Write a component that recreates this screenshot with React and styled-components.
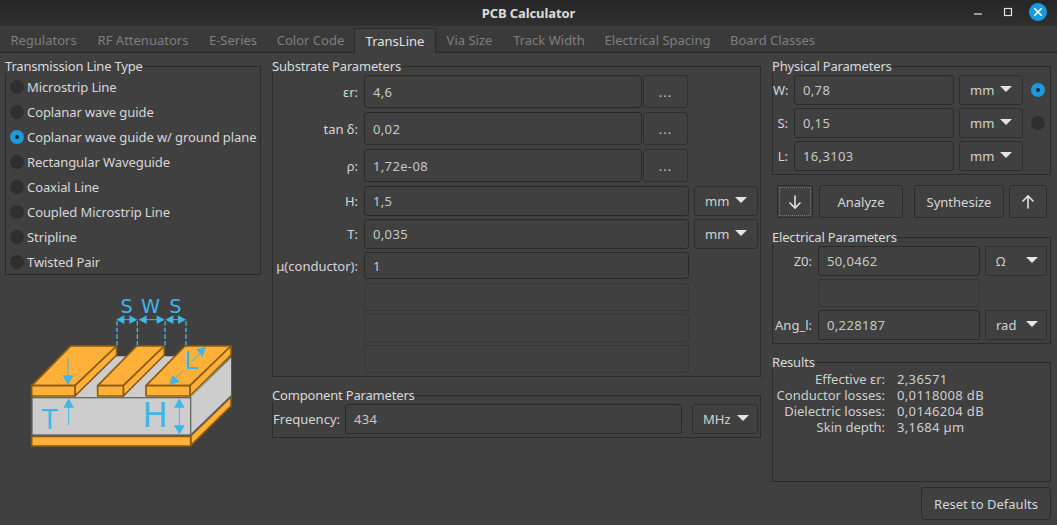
import React from "react";
import styled, { createGlobalStyle } from "styled-components";

const Global = createGlobalStyle`
  html, body { margin: 0; padding: 0; background: #404040; }
  body { width: 1057px; height: 525px; overflow: hidden; font-family: "Noto Sans", "Open Sans", sans-serif; font-size: 13px; color: #d6d6d6; }
  * { box-sizing: border-box; }
`;

const Window = styled.div`
  width: 1057px; height: 525px; display: flex; flex-direction: column; background: #404040;
`;
const TitleBar = styled.header`
  height: 26px; flex: none; display: flex; align-items: center; justify-content: center; position: relative;
  background: linear-gradient(#262626, #2f2f2f);
  font-weight: 700; font-size: 13px; color: #dcdcdc; letter-spacing: -0.1px;
`;
const WinControls = styled.div`
  position: absolute; right: 10px; top: 2px; display: flex; align-items: center; gap: 0;
`;
const WinIcon = styled.svg`
  display: block;
`;
const TabBar = styled.nav`
  height: 27px; flex: none; display: flex; align-items: flex-end; background: #3a3a3a; border-bottom: 1px solid #2a2a2a; padding-left: 0;
`;
const Tab = styled.div`
  height: ${p => (p.$active ? "25px" : "24px")};
  width: ${p => p.$w}px;
  display: flex; align-items: center; justify-content: center; white-space: nowrap;
  color: ${p => (p.$active ? "#e0e0e0" : "#7f7f7f")};
  font-size: 13px;
  ${p => p.$active ? "background:#404040;border:1px solid #2a2a2a;border-bottom:none;margin-bottom:-1px;border-radius:2px 2px 0 0;" : ""}
`;
const Body = styled.main`
  flex: 1; display: flex; gap: 11px; padding: 13px 6px 0 5px; align-items: flex-start;
`;
const Column = styled.section`
  width: ${p => p.$w}px; flex: none; display: flex; flex-direction: column;
`;
const Group = styled.div`
  position: relative; height: ${p => p.$h}px; margin-top: ${p => p.$mt || 0}px;
  border: 1px solid #2b2b2b; padding-top: 8px;
  display: flex; flex-direction: column;
`;
const GroupTitle = styled.span`
  position: absolute; left: -1px; top: -7px; line-height: 13px; background: #404040; color: #dadada; white-space: nowrap; letter-spacing: -0.18px;
`;
const RadioRow = styled.div`
  height: 25px; display: flex; align-items: center; gap: 3px; padding-left: 4px; color: #d8d8d8; white-space: nowrap; font-size: 13px; letter-spacing: -0.09px;
`;
const Radio = styled.span`
  width: 14px; height: 14px; border-radius: 50%; flex: none; display: flex; align-items: center; justify-content: center;
  background: ${p => (p.$on ? "#1b9ae0" : "#2f2f2f")};
  &::after { content: ""; display: ${p => (p.$on ? "block" : "none")}; width: 4px; height: 4px; border-radius: 50%; background: #232323; }
`;
const Diagram = styled.svg`
  display: block; margin-top: 6px;
`;
const Rows = styled.div`
  display: flex; flex-direction: column; gap: ${p => p.$gap}px;
`;
const Row = styled.div`
  display: flex; align-items: stretch; height: ${p => p.$h}px; margin-top: ${p => p.$mt || 0}px;
`;
const Label = styled.label`
  width: ${p => p.$w}px; flex: none; text-align: right; align-self: center; padding-right: ${p => p.$pr ?? 6}px; color: #d6d6d6; white-space: nowrap;
`;
const Input = styled.div`
  width: ${p => p.$w}px; flex: none; margin-left: ${p => p.$ml || 0}px; border: 1px solid ${p => (p.$empty ? "#363636" : "#2a2a2a")}; border-radius: 3px; background: #404040;
  display: flex; align-items: center; padding-left: 8px; color: #c8c8c8; letter-spacing: 0.35px;
`;
const DotsBtn = styled.div`
  width: 45px; flex: none; margin-left: 1px; border: 1px solid #2f2f2f; border-radius: 3px; display: flex; align-items: center; justify-content: center; color: #c8c8c8; background: #404040; letter-spacing: 1px;
`;
const Combo = styled.div`
  width: ${p => p.$w}px; flex: none; margin-left: ${p => p.$ml}px; border: 1px solid #2e2e2e; border-radius: 3px; display: flex; align-items: center; justify-content: space-between;
  padding: 0 ${p => p.$pr ?? 10}px 0 10px; color: #d2d2d2; background: #404040;
  &::after { content: ""; border-left: 6.5px solid transparent; border-right: 6.5px solid transparent; border-top: 6.5px solid #e4e4e4; margin-top: -2px; }
`;
const SideRadio = styled(Radio)`
  align-self: center; margin-left: 8px;
`;
const ActionRow = styled.div`
  display: flex; height: 33px; margin: 10px 0 19px 5px;
`;
const Button = styled.button`
  width: ${p => p.$w}px; margin-left: ${p => p.$ml || 0}px; flex: none; height: 100%; padding: 0; font: inherit; color: #d6d6d6; background: #404040; border: 1px solid #2c2c2c; border-radius: 3px;
  display: flex; align-items: center; justify-content: center; position: relative;
`;
const FocusRing = styled.span`
  position: absolute; inset: 1px; border: 1px dotted #7a7a7a;
`;
const ResultRow = styled.div`
  display: flex; height: 16px; align-items: center; line-height: 16px; white-space: nowrap;
`;
const ResultKey = styled.span`
  width: 112px; flex: none; text-align: right; color: #cfcfcf;
`;
const ResultValue = styled.span`
  margin-left: 12px; color: #cfcfcf; letter-spacing: 0.35px;
`;
const ResultList = styled.div`
  display: flex; flex-direction: column;
`;
const ResetRow = styled.div`
  display: flex; justify-content: flex-end; height: 33px; margin-top: 5px;
`;

const tabs = [["Regulators", 87], ["RF Attenuators", 112], ["E-Series", 68], ["Color Code", 87], ["TransLine", 82, true], ["Via Size", 67], ["Track Width", 92], ["Electrical Spacing", 125], ["Board Classes", 105]];
const lines = ["Microstrip Line", "Coplanar wave guide", "Coplanar wave guide w/ ground plane", "Rectangular Waveguide", "Coaxial Line", "Coupled Microstrip Line", "Stripline", "Twisted Pair"];

const Orange = "#ffb038", OrangeS = "#8a5a10", Blue = "#3fb6e8";

function Strip({ x0, x1, x2, x3 }) {
  return (
    <g fill={Orange} stroke={OrangeS} strokeWidth="5" strokeLinejoin="round">
      <polygon points={`${x0},314 ${x2},195 ${x3},195 ${x1},314`} />
      <polygon points={`${x1},314 ${x3},195 ${x3},222 ${x1},345`} />
      <rect x={x0} y="314" width={x1 - x0} height="31" />
    </g>
  );
}

function Board() {
  return (
    <Diagram width="256" height="180" viewBox="15 0 768 540">
      <polygon points="215,226 693,226 572,350 95,350" fill="#cdcdcd" />
      <g fill={Orange} stroke={OrangeS} strokeWidth="5" strokeLinejoin="round">
        <polygon points="572,465 693,348 693,375 572,494" />
        <rect x="95" y="466" width="477" height="29" />
      </g>
      <polygon points="572,350 693,230 693,345 572,462" fill="#cdcdcd" stroke="#cdcdcd" />
      <polyline points="693,345 572,462" fill="none" stroke="#5e5e5e" strokeWidth="4" />
      <rect x="96" y="350" width="476" height="112" fill="#cdcdcd" stroke="#666" strokeWidth="4" />
      <Strip x0={95} x1={225} x2={212} x3={350} />
      <Strip x0={293} x1={370} x2={410} x3={493} />
      <Strip x0={438} x1={570} x2={555} x3={693} />
      <g stroke={Blue} fill="none" strokeWidth="4">
        <path d="M351 120V192M412 120V192M495 120V192M558 120V192" strokeDasharray="14 6" />
        <path d="M360 116H405M425 116H485M505 116H550" strokeWidth="3" />
        <path d="M204 232V290M206 375V432M538 375V437" strokeWidth="3" />
        <path d="M602 215L575 242M550 268L525 293" strokeWidth="3" />
      </g>
      <g fill={Blue}>
        <path d="M349 116l24-13v26zM412 116l-24-13v26zM416 116l24-13v26zM494 116l-24-13v26zM496 116l24-13v26zM558 116l-24-13v26z" />
        <path d="M188 283h33l-17 29zM190 380h32l-16-28zM522 380h32l-16-28zM522 433h32l-16 28z" />
        <path d="M618 198l-29 7l19 23zM508 312l10-30l22 20z" />
      </g>
      <g fill={Blue} fontFamily="'DejaVu Sans', sans-serif" textAnchor="middle">
        <text x="380" y="96" fontSize="58">S</text>
        <text x="452" y="96" fontSize="58">W</text>
        <text x="526" y="96" fontSize="58">S</text>
        <text x="149" y="445" fontSize="78">T</text>
        <text x="465" y="439" fontSize="102">H</text>
        <text x="572" y="265" fontSize="72">L</text>
      </g>
    </Diagram>
  );
}

const Unit = ({ w, ml, pr, children }) => <Combo $w={w} $ml={ml} $pr={pr}>{children}</Combo>;

export default function App() {
  return (
    <Window>
      <Global />
      <TitleBar>
        PCB Calculator
        <WinControls>
          <WinIcon width="60" height="20" viewBox="0 0 60 20">
            <path d="M5 12H13" stroke="#e2e2e2" strokeWidth="1.2" />
            <rect x="35.5" y="6.5" width="7" height="7" fill="none" stroke="#e2e2e2" strokeWidth="1.2" />
          </WinIcon>
          <WinIcon width="18" height="18" viewBox="0 0 18 18">
            <circle cx="9" cy="9" r="9" fill="#1a9ae0" />
            <path d="M5.3 5.3L12.7 12.7M12.7 5.3L5.3 12.7" stroke="#fff" strokeWidth="1.6" />
          </WinIcon>
        </WinControls>
      </TitleBar>
      <TabBar>
        {tabs.map(([t, w, a]) => <Tab key={t} $w={w} $active={a}>{t}</Tab>)}
      </TabBar>
      <Body>
        <Column $w={256}>
          <Group $h={209}>
            <GroupTitle>Transmission Line Type</GroupTitle>
            {lines.map((l, i) => <RadioRow key={l}><Radio $on={i === 2} />{l}</RadioRow>)}
          </Group>
          <Board />
        </Column>
        <Column $w={489}>
          <Group $h={311}>
            <GroupTitle>Substrate Parameters</GroupTitle>
            <Rows $gap={4}>
              {[["εr:", "4,6"], ["tan δ:", "0,02"], ["ρ:", "1,72e-08"]].map(([k, v]) => (
                <Row $h={33} key={k}><Label $w={91}>{k}</Label><Input $w={278}>{v}</Input><DotsBtn>...</DotsBtn></Row>
              ))}
            </Rows>
            <Row $h={30} $mt={4}><Label $w={91}>H:</Label><Input $w={325}>1,5</Input><Unit w={64} ml={5}>mm</Unit></Row>
            <Row $h={30} $mt={3}><Label $w={91}>T:</Label><Input $w={325}>0,035</Input><Unit w={64} ml={5}>mm</Unit></Row>
            <Row $h={27} $mt={3}><Label $w={91}>μ(conductor):</Label><Input $w={325}>1</Input></Row>
            <Row $h={28} $mt={4}><Label $w={91} /><Input $w={325} $empty /></Row>
            <Row $h={28} $mt={3}><Label $w={91} /><Input $w={325} $empty /></Row>
            <Row $h={28} $mt={3}><Label $w={91} /><Input $w={325} $empty /></Row>
          </Group>
          <Group $h={43} $mt={18}>
            <GroupTitle>Component Parameters</GroupTitle>
            <Row $h={30}><Label $w={72} $pr={5}>Frequency:</Label><Input $w={337}>434</Input><Unit w={66} ml={10} pr={8}>MHz</Unit></Row>
          </Group>
        </Column>
        <Column $w={279}>
          <Group $h={109}>
            <GroupTitle>Physical Parameters</GroupTitle>
            <Rows $gap={3}>
              <Row $h={30}><Label $w={15} $pr={0}>W:</Label><Input $ml={6} $w={160}>0,78</Input><Unit w={64} ml={5}>mm</Unit><SideRadio $on /></Row>
              <Row $h={30}><Label $w={15} $pr={0}>S:</Label><Input $ml={6} $w={160}>0,15</Input><Unit w={64} ml={5}>mm</Unit><SideRadio /></Row>
              <Row $h={30}><Label $w={15} $pr={0}>L:</Label><Input $ml={6} $w={160}>16,3103</Input><Unit w={64} ml={5}>mm</Unit></Row>
            </Rows>
          </Group>
          <ActionRow>
            <Button $w={36}>
              <FocusRing />
              <svg width="16" height="16" viewBox="0 0 16 16"><path d="M8 1.5V14M2.5 8.5L8 14L13.5 8.5" fill="none" stroke="#e6dfe6" strokeWidth="1.6" /></svg>
            </Button>
            <Button $w={84} $ml={6}>Analyze</Button>
            <Button $w={90} $ml={11}>Synthesize</Button>
            <Button $w={38} $ml={5}>
              <svg width="16" height="16" viewBox="0 0 16 16"><path d="M8 14.5V2M2.5 7.5L8 2L13.5 7.5" fill="none" stroke="#e6dfe6" strokeWidth="1.6" /></svg>
            </Button>
          </ActionRow>
          <Group $h={107}>
            <GroupTitle>Electrical Parameters</GroupTitle>
            <Row $h={30}><Label $w={39} $pr={0}>Z0:</Label><Input $ml={6} $w={162}>50,0462</Input><Unit w={62} ml={5} pr={8}>Ω</Unit></Row>
            <Row $h={28} $mt={3}><Label $w={39} $pr={0} /><Input $ml={6} $w={162} $empty /></Row>
            <Row $h={30} $mt={3}><Label $w={39} $pr={0}>Ang_l:</Label><Input $ml={6} $w={162}>0,228187</Input><Unit w={62} ml={5} pr={8}>rad</Unit></Row>
          </Group>
          <Group $h={120} $mt={18}>
            <GroupTitle>Results</GroupTitle>
            <ResultList>
              {[["Effective εr:", "2,36571"], ["Conductor losses:", "0,0118008 dB"], ["Dielectric losses:", "0,0146204 dB"], ["Skin depth:", "3,1684 µm"]].map(([k, v]) => (
                <ResultRow key={k}><ResultKey>{k}</ResultKey><ResultValue>{v}</ResultValue></ResultRow>
              ))}
            </ResultList>
          </Group>
          <ResetRow>
            <Button $w={130}>Reset to Defaults</Button>
          </ResetRow>
        </Column>
      </Body>
    </Window>
  );
}
